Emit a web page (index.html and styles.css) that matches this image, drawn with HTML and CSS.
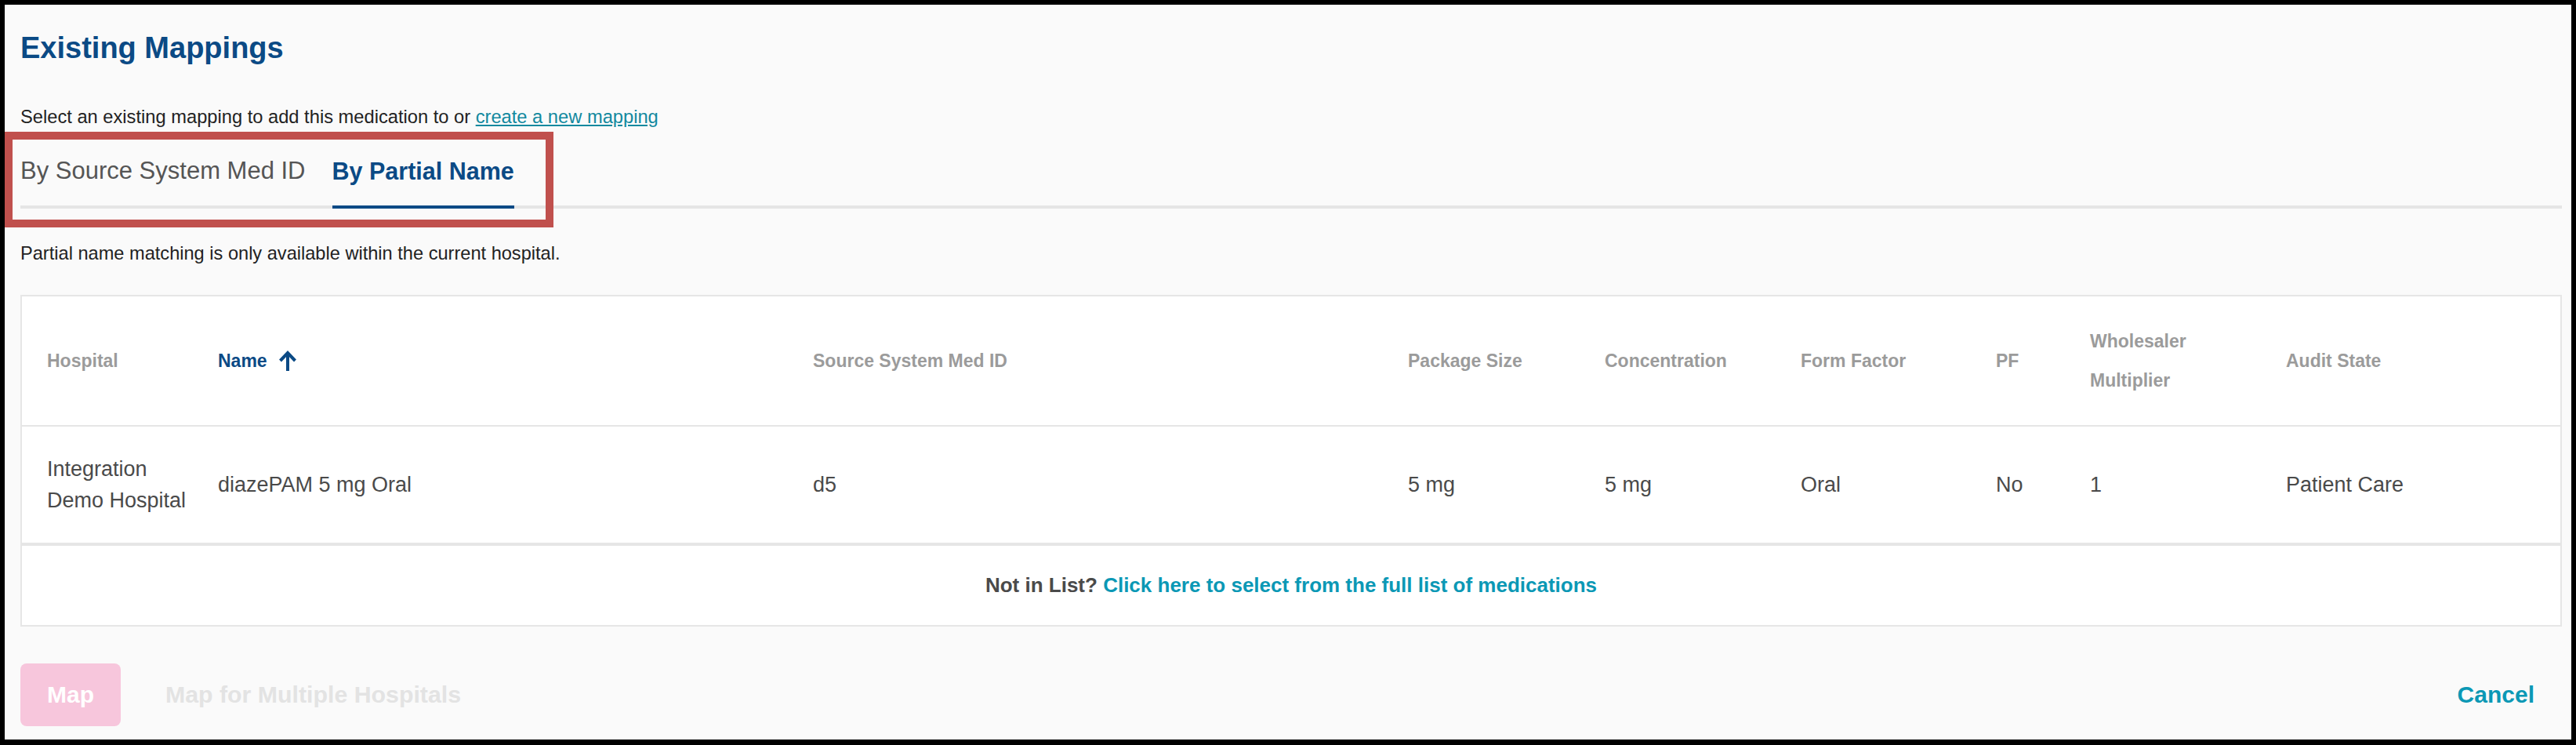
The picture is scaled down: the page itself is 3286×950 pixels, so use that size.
FILE: index.html
```html
<!DOCTYPE html>
<html lang="en">
<head>
<meta charset="utf-8">
<title>Existing Mappings</title>
<link rel="stylesheet" href="styles.css">
</head>
<body>
<div class="panel">
  <h1 class="title">Existing Mappings</h1>
  <p class="intro">Select an existing mapping to add this medication to or <a class="intro-link" href="#">create a new mapping</a></p>
  <div class="tabs">
    <div class="tab">By Source System Med ID</div>
    <div class="tab tab-active">By Partial Name</div>
  </div>
  <p class="note">Partial name matching is only available within the current hospital.</p>
  <div class="card">
    <div class="row row-head">
      <div class="cell">Hospital</div>
      <div class="cell cell-sorted">Name
        <svg class="sort-icon" width="24" height="28" viewBox="0 0 24 28"><path d="M12 27 V4 M2.5 14 L12 4 L21.5 14" fill="none" stroke="#0b4a85" stroke-width="4"/></svg>
      </div>
      <div class="cell">Source System Med ID</div>
      <div class="cell">Package Size</div>
      <div class="cell">Concentration</div>
      <div class="cell">Form Factor</div>
      <div class="cell">PF</div>
      <div class="cell"><span class="line">Wholesaler</span><span class="line">Multiplier</span></div>
      <div class="cell">Audit State</div>
    </div>
    <div class="row row-body">
      <div class="cell">Integration Demo Hospital</div>
      <div class="cell">diazePAM 5 mg Oral</div>
      <div class="cell">d5</div>
      <div class="cell">5 mg</div>
      <div class="cell">5 mg</div>
      <div class="cell">Oral</div>
      <div class="cell">No</div>
      <div class="cell">1</div>
      <div class="cell">Patient Care</div>
    </div>
    <div class="card-foot">
      <p class="foot-text"><span class="foot-label">Not in List?</span> <a class="foot-link" href="#">Click here to select from the full list of medications</a></p>
    </div>
  </div>
  <div class="actions">
    <div class="actions-left">
      <button class="btn-map" type="button">Map</button>
      <button class="btn-multi" type="button">Map for Multiple Hospitals</button>
    </div>
    <button class="btn-cancel" type="button">Cancel</button>
  </div>
</div>
<div class="highlight"></div>
</body>
</html>
```

FILE: styles.css
```css
html, body {
  margin: 0;
  padding: 0;
}
body {
  background: #000;
  height: 950px;
  box-sizing: border-box;
  padding: 6px 6px 7px 6px;
  font-family: "Liberation Sans", Arial, sans-serif;
  position: relative;
}
.panel {
  background: #fafafa;
  height: 100%;
  box-sizing: border-box;
  padding: 30px 12px 0 20px;
  display: flex;
  flex-direction: column;
}
.title {
  margin: 0;
  font-size: 38px;
  line-height: 50px;
  font-weight: 700;
  color: #0b4a85;
}
.intro {
  margin: 48px 0 0 0;
  font-size: 23.7px;
  line-height: 30px;
  color: #222;
}
.intro-link {
  color: #12899f;
  text-decoration: underline;
}
.tabs {
  margin-top: 34px;
  display: flex;
  gap: 34px;
  border-bottom: 4px solid #e5e5e5;
}
.tab {
  font-size: 31px;
  line-height: 40px;
  padding-bottom: 24px;
  color: #555;
  border-bottom: 4px solid transparent;
  margin-bottom: -4px;
}
.tab-active {
  font-size: 30.5px;
  font-weight: 700;
  color: #0b4a85;
  border-bottom-color: #0b4a85;
}
.note {
  margin: 42px 0 0 0;
  font-size: 23.6px;
  line-height: 30px;
  color: #222;
}
.card {
  margin-top: 38px;
  background: #fff;
  border: 2px solid #e6e6e6;
}
.row {
  display: grid;
  grid-template-columns: 218px 759px 759px 251px 250px 249px 120px 250px 1fr;
  padding-left: 32px;
  align-items: center;
  border-bottom: 2px solid #e6e6e6;
}
.row-head {
  height: 164px;
  font-size: 23px;
  font-weight: 700;
  color: #9b9b9b;
  line-height: 50px;
}
.row-body {
  height: 148px;
  font-size: 27px;
  color: #4a4a4a;
  line-height: 40px;
}
.cell {
  padding-right: 20px;
}
.cell-sorted {
  color: #0b4a85;
  display: flex;
  align-items: center;
  gap: 14px;
}
.sort-icon {
  display: block;
}
.line {
  display: block;
}
.card-foot {
  border-top: 2px solid #e6e6e6;
  height: 101px;
  display: flex;
  align-items: center;
  justify-content: center;
}
.foot-text {
  margin: 0;
  font-size: 26px;
  font-weight: 700;
}
.foot-label {
  color: #4a4a4a;
}
.foot-link {
  color: #0b98b5;
  text-decoration: none;
}
.actions {
  margin-top: 47px;
  display: flex;
  align-items: center;
  justify-content: space-between;
}
.actions-left {
  display: flex;
  align-items: center;
  gap: 57px;
}
button {
  font-family: inherit;
  border: 0;
  background: none;
  padding: 0;
  font-size: 30px;
  font-weight: 700;
}
.btn-map {
  background: #f7c6dc;
  color: #fff;
  width: 128px;
  height: 80px;
  border-radius: 8px;
}
.btn-multi {
  color: #e3e3e3;
  font-size: 30.3px;
}
.btn-cancel {
  color: #0b98b5;
  margin-right: 35px;
}
.highlight {
  position: absolute;
  left: 6px;
  top: 168px;
  width: 700px;
  height: 122px;
  box-sizing: border-box;
  border: 10px solid #c0504d;
  pointer-events: none;
}
```
